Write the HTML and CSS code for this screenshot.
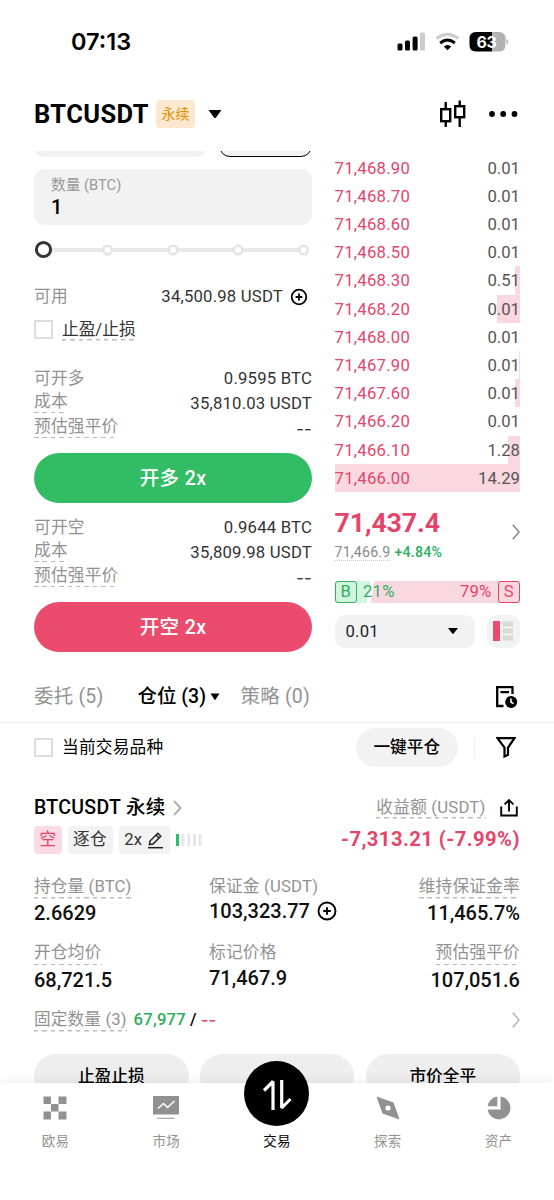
FILE: index.html
```html
<!DOCTYPE html>
<html lang="zh-CN">
<head>
<meta charset="utf-8">
<title>BTCUSDT 永续</title>
<link rel="stylesheet" href="styles.css">
</head>
<body>
<div class="app">
  <div class="status">
    <span class="time">07:13</span>
    <svg class="status-icons" width="112" height="22" viewBox="0 0 112 22">
      <g fill="#000"><rect x="0.5" y="12.5" width="5" height="7" rx="1.5"/><rect x="8" y="9.5" width="5" height="10" rx="1.5"/><rect x="15.600" y="5.500" width="5" height="14" rx="1.500"/></g>
      <rect x="23" y="1.500" width="5" height="18" rx="1.500" fill="#ccc"/>
      <g fill="none" stroke-width="3"><path d="M39.500 7.600Q50.500-0.800 61.500 7.600" stroke="#ccc"/><path d="M43.200 12Q50.500 5.900 57.800 12" stroke="#000"/></g>
      <path d="M46.800 15.500Q50.500 12.300 54.200 15.500L50.500 19.300Z"/>
      <path d="M79 1H95.200V20.500H79Q72.500 20.500 72.500 14V7.500Q72.500 1 79 1Z"/>
      <path d="M95.200 1H102Q108.500 1 108.500 7.500V14Q108.500 20.500 102 20.500H95.200Z" fill="#b2b2b2"/>
      <path d="M109.500 8Q111.300 9 111.300 10.700T109.500 13.500Z" fill="#b2b2b2"/>
      <text x="89.500" y="16.600" class="battery">63</text>
    </svg>
  </div>
  <header class="header">
    <h1>BTCUSDT</h1>
    <span class="perp">永续</span>
    <svg class="pair-caret" width="14" height="9" viewBox="0 0 14 9"><path d="M0.500 0H13.500L8 7.500Q7 8.600 6 7.500Z"/></svg>
    <svg class="candles" width="28" height="28" viewBox="0 0 28 28"><g fill="none" stroke="#000" stroke-width="2.400"><rect x="2.200" y="9.200" width="9" height="12"/><rect x="16.200" y="6.200" width="9" height="11"/><path d="M6.700 2V9M6.700 21.500V27M20.700 0.500V6M20.700 17.500V27"/></g></svg>
    <svg class="dots" width="30" height="8" viewBox="0 0 30 8"><circle cx="4" cy="4" r="2.900"/><circle cx="15.200" cy="4" r="2.900"/><circle cx="26.500" cy="4" r="2.900"/></svg>
  </header>
  <main class="scroll">
    <section class="trade">
      <div class="form">
        <div class="stubs"><div class="stub-a"></div><div class="stub-b"></div></div>
        <div class="input"><div class="input-label">数量 (BTC)</div><div class="input-value">1</div></div>
        <svg class="slider" width="278" height="50" viewBox="0 0 278 50">
          <path d="M10 25H270" stroke="#e9e9e9" stroke-width="4"/>
          <g fill="#fff" stroke="#e4e4e4" stroke-width="2.600"><circle cx="73.500" cy="25" r="4.300"/><circle cx="139" cy="25" r="4.300"/><circle cx="204" cy="25" r="4.300"/><circle cx="269.500" cy="25" r="4.300"/></g>
          <circle cx="9.500" cy="24.500" r="7.100" fill="#fff" stroke="#333" stroke-width="3"/>
        </svg>
        <div class="row avail"><span class="k">可用</span><span class="v">34,500.98 USDT</span>
          <svg class="plus" width="18" height="18" viewBox="0 0 18 18"><g fill="none" stroke="#000" stroke-width="1.800"><circle cx="9" cy="9" r="7.300"/><path d="M5.600 9H12.400M9 5.600V12.400"/></g></svg></div>
        <div class="row tpsl"><i class="check"></i><span class="dash dark">止盈/止损</span></div>
        <div class="info">
          <div class="row r1"><span class="k">可开多</span><span class="v">0.9595 BTC</span></div>
          <div class="row r2"><span class="k dash">成本</span><span class="v low">35,810.03 USDT</span></div>
          <div class="row r3"><span class="k dash">预估强平价</span><span class="v low none">--</span></div>
        </div>
        <div class="btn long">开多 2x</div>
        <div class="info second">
          <div class="row r1"><span class="k">可开空</span><span class="v">0.9644 BTC</span></div>
          <div class="row r2"><span class="k dash">成本</span><span class="v low">35,809.98 USDT</span></div>
          <div class="row r3"><span class="k dash">预估强平价</span><span class="v low none">--</span></div>
        </div>
        <div class="btn short">开空 2x</div>
      </div>
      <div class="book">
        <div class="ask d0"><b>71,468.90</b><span>0.01</span></div>
        <div class="ask d0"><b>71,468.70</b><span>0.01</span></div>
        <div class="ask d0"><b>71,468.60</b><span>0.01</span></div>
        <div class="ask d0"><b>71,468.50</b><span>0.01</span></div>
        <div class="ask d5"><b>71,468.30</b><span>0.51</span></div>
        <div class="ask d23"><b>71,468.20</b><span>0.01</span></div>
        <div class="ask d0"><b>71,468.00</b><span>0.01</span></div>
        <div class="ask d1"><b>71,467.90</b><span>0.01</span></div>
        <div class="ask d5"><b>71,467.60</b><span>0.01</span></div>
        <div class="ask d0"><b>71,466.20</b><span>0.01</span></div>
        <div class="ask d12"><b>71,466.10</b><span>1.28</span></div>
        <div class="ask dfull"><b>71,466.00</b><span>14.29</span></div>
        <div class="last">
          <div><div class="price">71,437.4</div><div class="mark"><span class="mark-px">71,466.9</span><span class="up">+4.84%</span></div></div>
          <svg width="8" height="16" viewBox="0 0 8 16"><path d="M0.800 0.800L7 8L0.800 15.200" fill="none" stroke="#888" stroke-width="1.500"/></svg>
        </div>
        <div class="ratio"><span class="side b">B</span><span class="pb">21%</span><span class="ps">79%</span><span class="side s">S</span></div>
        <div class="tools">
          <div class="tick">0.01<svg width="10" height="7" viewBox="0 0 10 7"><path d="M0 0H10L5.700 5.600Q5 6.400 4.300 5.600Z"/></svg></div>
          <div class="depth"><svg width="20" height="20" viewBox="0 0 20 20"><path d="M0 0H7V20H0Z" fill="#eb4b6d"/><path d="M9.500 0.500H20V5.500H9.500ZM9.500 7.500H20V12.500H9.500ZM9.500 14.500H20V19.500H9.500Z" fill="#d8dad8"/></svg></div>
        </div>
      </div>
    </section>
    <nav class="tabs">
      <span class="tab">委托 (5)</span>
      <span class="tab on">仓位 (3)</span><svg class="tab-caret" width="10" height="8" viewBox="0 0 10 8"><path d="M0.500 0.500H9.500L5.600 6.500Q5 7.200 4.400 6.500Z"/></svg>
      <span class="tab last-tab">策略 (0)</span>
      <svg class="history" width="24" height="24" viewBox="0 0 24 24"><path d="M18.500 9V2.200H3.200V21H9.500M6.500 7.200H15" fill="none" stroke="#000" stroke-width="2.300"/><circle cx="17.200" cy="17" r="6"/><path d="M17 13.500V17.200L19.600 18.600" fill="none" stroke="#fff" stroke-width="1.600"/></svg>
    </nav>
    <div class="filter">
      <i class="check"></i><span class="only">当前交易品种</span>
      <span class="close-all">一键平仓</span><i class="sep"></i>
      <svg width="20" height="23" viewBox="0 0 20 23"><path d="M1.500 2.200H18.500L12 11.500V18.800L8.500 20.500V11.500Z" fill="none" stroke="#000" stroke-width="2.200"/></svg>
    </div>
    <section class="position">
      <div class="head">
        <span class="name">BTCUSDT 永续</span>
        <svg class="go" width="9" height="16" viewBox="0 0 9 16"><path d="M1 1L7.500 8L1 15" fill="none" stroke="#b0b0b0" stroke-width="2"/></svg>
        <span class="dash pl">收益额 (USDT)</span>
        <svg width="18" height="19" viewBox="0 0 18 19"><path d="M1.200 8.500V17.500H16.800V8.500M9 13.500V2.500M4.600 6.400L9 2L13.400 6.400" fill="none" stroke="#000" stroke-width="1.900"/></svg>
      </div>
      <div class="tags">
        <span class="tag red">空</span><span class="tag iso">逐仓</span>
        <span class="tag lev">2x<svg width="17" height="18" viewBox="0 0 17 18"><g fill="none" stroke="#222" stroke-width="1.500"><path d="M2.500 13.500L3 10L10.800 2.200L13.800 5.200L6 13ZM9 4L12 7"/><path d="M1 16.700H16"/></g></svg></span>
        <svg class="adl" width="27" height="12" viewBox="0 0 27 12"><rect width="3" height="12" fill="#2ebd62"/><path d="M5.700 0H8.400V12H5.700ZM11.400 0H14.100V12H11.400ZM17.100 0H19.800V12H17.100ZM22.800 0H25.500V12H22.800Z" fill="#e6e6e6"/></svg>
        <span class="pnl">-7,313.21 (-7.99%)</span>
      </div>
      <div class="stats">
        <div><span class="dash">持仓量 (BTC)</span><strong>2.6629</strong></div>
        <div class="mid"><span>保证金 (USDT)</span><strong>103,323.77<svg width="20" height="20" viewBox="0 0 20 20"><g fill="none" stroke="#000" stroke-width="1.900"><circle cx="10" cy="10" r="8.500"/><path d="M6.200 10H13.800M10 6.200V13.800"/></g></svg></strong></div>
        <div class="right"><span class="dash">维持保证金率</span><strong>11,465.7%</strong></div>
        <div><span class="dash">开仓均价</span><strong>68,721.5</strong></div>
        <div class="mid"><span>标记价格</span><strong>71,467.9</strong></div>
        <div class="right"><span class="dash">预估强平价</span><strong>107,051.6</strong></div>
      </div>
      <div class="fixed">
        <span class="dash">固定数量 (3)</span><span class="tp">67,977</span><span class="slash">/</span><span class="sl none">--</span>
        <svg width="8" height="16" viewBox="0 0 8 16"><path d="M0.800 0.800L7 8L0.800 15.200" fill="none" stroke="#b5b5b5" stroke-width="1.500"/></svg>
      </div>
      <div class="actions"><span>止盈止损</span><span></span><span>市价全平</span></div>
    </section>
  </main>
  <footer class="nav">
    <div class="item"><svg width="24" height="24" viewBox="0 0 24 24"><path d="M0.500 0.500H8V8H0.500ZM15.500 0.500H23.500V8H15.500ZM8 8H15.500V15.500H8ZM0.500 15.500H8V23.500H0.500ZM15.500 15.500H23.500V23.500H15.500Z"/></svg><span>欧易</span></div>
    <div class="item"><svg width="26" height="24" viewBox="0 0 26 24"><path d="M0 0H26V18.500H0ZM4.500 21.800H21.500V22.800H4.500Z"/><path d="M5 12.500L10.500 7.500L14.500 11.500L21.500 5" fill="none" stroke="#fff" stroke-width="1.500"/></svg><span>市场</span></div>
    <div class="item active"><div class="disc"><svg width="32" height="36" viewBox="0 0 32 36"><path d="M3 14.500L12 5.500V34M20.700 4V32L29.500 23" fill="none" stroke="#fff" stroke-width="3.200" stroke-linejoin="bevel"/></svg></div><span>交易</span></div>
    <div class="item"><svg width="24" height="24" viewBox="0 0 24 24"><path d="M0.500 0.500L17.500 6.500L23.500 23.500L6.500 17.500Z"/><circle cx="12" cy="12" r="2.600" fill="#fff"/></svg><span>探索</span></div>
    <div class="item"><svg width="24" height="24" viewBox="0 0 24 24"><path d="M10.300 0.600V10.300H0.600A11.600 11.600 0 0 1 10.300 0.600ZM13.600 0.600A11.500 11.500 0 1 1 0.600 13.600H13.600Z"/></svg><span>资产</span></div>
  </footer>
</div>
</body>
</html>
```
FILE: styles.css
```css
* { box-sizing: border-box; }
body {
  margin: 0;
  background: #fff;
  color: #000;
  font: 16.7px/22px Roboto, "Noto Sans CJK SC", sans-serif;
  letter-spacing: 0.2px;
  white-space: nowrap;
}
svg { display: block; flex: none; }
i { display: block; flex: none; }
.app { width: 554px; height: 1200px; display: flex; flex-direction: column; overflow: hidden; }

.status { height: 84px; flex: none; padding: 0 45.500px 0 71px; display: flex; align-items: center; justify-content: space-between; }
.time { font: 600 23.500px/30px Inter, sans-serif; letter-spacing: 0; }
.battery { font: 700 16px Inter, sans-serif; fill: #fff; text-anchor: middle; letter-spacing: -0.300px; }

.header { height: 67px; flex: none; padding: 0 36.500px 7px 34px; display: flex; align-items: center; }
.header h1 { margin: 0; width: 116px; font-size: 25.500px; line-height: 30px; font-weight: 700; letter-spacing: 0.400px; }
.perp { margin-left: 6px; width: 39px; height: 28px; border-radius: 4px; background: #fbe8ce; color: #e09000; font-size: 14px; line-height: 28px; text-align: center; letter-spacing: 0; }
.pair-caret { margin-left: 13px; }
.candles { margin-left: auto; margin-right: 21px; }

.scroll { height: 932px; flex: none; overflow: hidden; }
.trade { height: 521px; padding: 0 34px; display: flex; justify-content: space-between; }
.form { width: 278px; }
.stubs { height: 5.500px; display: flex; justify-content: space-between; align-items: flex-end; overflow: hidden; }
.stub-a, .stub-b { height: 40px; border-radius: 11px; background: #f2f2f2; flex: none; }
.stub-a { width: 173px; }
.stub-b { width: 93px; border: 1.500px solid #000; }
.input { margin-top: 12px; height: 56px; border-radius: 11px; background: #f2f2f2; padding: 6px 17px; }
.input-label { font-size: 14.700px; line-height: 20px; color: #999; letter-spacing: 0; }
.input-value { font-size: 20px; line-height: 25px; font-weight: 500; }
.row { display: flex; align-items: center; justify-content: space-between; color: #333; }
.v { letter-spacing: 0.200px; }
.k { color: #929292; }
.avail { height: 44px; }
.avail .v { margin-left: auto; }
.avail .plus { margin: 0 4px 0 7px; }
.check { width: 19px; height: 19px; border: 2px solid #ddd; }
.tpsl { height: 22px; justify-content: flex-start; gap: 9px; }
.dash {
  background: repeating-linear-gradient(90deg, #bbb 0 4.500px, transparent 4.500px 8.400px) left bottom / 100% 1.500px no-repeat;
}
.tpsl .dash { letter-spacing: 0; }
.info { margin-top: 27.500px; }
.info.second { margin-top: 14px; }
.r1 { height: 22px; }
.r2 { height: 24px; }
.r3 { height: 26px; }
.low { padding-top: 4px; }
.none { font-family: Inter, sans-serif; }
.btn { margin-top: 12.500px; height: 50.500px; border-radius: 26px; color: #fff; font-size: 19.500px; line-height: 51.500px; font-weight: 500; text-align: center; letter-spacing: 0.400px; }
.long { background: #32bd65; }
.short { background: #eb4b6d; }

.book { width: 185.500px; padding-top: 2.800px; }
.ask { height: 28.180px; line-height: 29.500px; display: flex; justify-content: space-between; color: #555; letter-spacing: 0; background: linear-gradient(#fad8e0, #fad8e0) right / 0 100% no-repeat; }
.ask b { font-weight: 400; color: #e5446b; letter-spacing: 0.250px; }
.ask.d1 { background-size: 1px 100%; }
.ask.d5 { background-size: 5px 100%; }
.ask.d12 { background-size: 12px 100%; }
.ask.d23 { background-size: 23px 100%; }
.ask.dfull { background-size: 100% 100%; }
.last { height: 89px; padding-top: 14px; display: flex; justify-content: space-between; }
.last > svg { margin-top: 18px; }
.price { color: #e5446b; font-size: 26.700px; line-height: 34px; font-weight: 700; letter-spacing: -0.100px; }
.mark { display: flex; gap: 4px; font-size: 14.200px; line-height: 16px; margin-top: 4px; }
.mark-px { color: #888; border-bottom: 1px dotted #ccc; }
.up { color: #2baf5c; font-weight: 500; }
.ratio { height: 22px; display: flex; align-items: center; background: linear-gradient(100deg, #d2f5de 0 35px, #fff 35px 39px, #fad8e0 39px); border-radius: 2px; }
.side { width: 22.500px; height: 22px; border: 1.500px solid; border-radius: 3px; line-height: 20.500px; text-align: center; }
.b, .pb { color: #2fae60; }
.s, .ps { color: #e5446b; }
.pb { margin-left: 6px; }
.ps { margin-left: auto; margin-right: 6px; }
.tools { margin-top: 12px; display: flex; justify-content: space-between; }
.tick { width: 140px; height: 33px; padding: 1px 17px 0 11px; border-radius: 10px; background: #f2f2f2; display: flex; align-items: center; justify-content: space-between; color: #222; }
.depth { width: 33.500px; height: 33px; border-radius: 10px; background: #f2f2f2; display: grid; place-items: center; }

.tabs { height: 50.500px; padding: 0 36px 0 34px; border-bottom: 1.500px solid #eee; display: flex; align-items: center; font-size: 19.500px; color: #929292; }
.tab { width: 69px; }
.tab.on { margin-left: 34.500px; color: #000; font-weight: 500; letter-spacing: 0; }
.tab-caret { margin-left: 3px; }
.last-tab { margin-left: 21px; }
.history { margin-left: auto; }

.filter { height: 50.500px; padding: 0 38px 0 34px; display: flex; align-items: center; }
.only { margin-left: 9px; padding-top: 1px; }
.close-all { margin-left: auto; width: 101.500px; height: 39px; border-radius: 20px; background: #f2f2f2; line-height: 40px; font-weight: 500; text-align: center; letter-spacing: 0; }
.sep { width: 1px; height: 20px; margin: 0 21px 0 16.500px; background: #eee; }

.position { padding: 23px 34px 0; }
.head { height: 23px; display: flex; align-items: center; color: #929292; }
.name { color: #000; font-size: 19.500px; font-weight: 500; width: 132px; letter-spacing: 0.300px; }
.go { margin-left: 7px; }
.pl { margin-left: auto; margin-right: 14.500px; }
.head > svg:last-child { margin-right: 2px; }
.tags { margin-top: 6.500px; height: 28px; display: flex; align-items: center; }
.tag { height: 28px; line-height: 28px; border-radius: 4px; background: #f2f2f2; color: #333; text-align: center; }
.red { width: 28px; background: #fbdbe3; color: #e5446b; }
.iso { width: 45px; margin-left: 5.500px; }
.lev { width: 51.500px; margin-left: 6px; display: flex; align-items: center; justify-content: center; gap: 5px; }
.adl { margin-left: 6px; }
.pnl { margin-left: auto; padding-bottom: 2px; color: #e5446b; font-size: 20.200px; font-weight: 700; letter-spacing: 0.450px; }

.stats { margin-top: 22px; display: grid; grid-template-columns: 175px 1fr auto; row-gap: 11px; }
.stats > div { height: 55.500px; color: #929292; display: flex; flex-direction: column; align-items: flex-start; }
.stats span { line-height: 22px; height: 23px; }
.stats > div:first-child span { letter-spacing: 0.100px; }
.stats strong { margin-top: 2.500px; color: #111; font-size: 20px; line-height: 24px; font-weight: 500; letter-spacing: 0; display: flex; align-items: center; gap: 7px; }
.stats .right { align-items: flex-end; }
.stats .mid strong { margin-top: 0.500px; }
.fixed { margin-top: 10.500px; height: 24px; display: flex; align-items: center; color: #929292; }
.fixed .dash { height: 23px; letter-spacing: 0.100px; }
.tp { margin-left: 7px; color: #2baf5c; font-weight: 500; }
.slash { margin-left: 4px; color: #000; font-weight: 500; }
.sl { margin-left: 4px; color: #e5446b; font-weight: 500; }
.fixed svg { margin-left: auto; }
.actions { margin-top: 21.500px; display: flex; justify-content: space-between; }
.actions span { width: 154.500px; height: 44px; border-radius: 22px; background: #eee; line-height: 45px; text-align: center; font-weight: 500; letter-spacing: 0; }

.nav { position: relative; flex: none; height: 117px; background: #fff; box-shadow: 0 -2px 10px rgba(0, 0, 0, 0.07); display: grid; grid-template-columns: repeat(5, 1fr); padding-top: 13px; }
.item { display: flex; flex-direction: column; align-items: center; fill: #919191; color: #919191; font-size: 13.500px; }
.item span { margin-top: 11px; line-height: 21px; }
.active { color: #000; }
.disc { width: 65px; height: 65px; margin-top: -35px; margin-bottom: -6px; border-radius: 50%; background: #000; display: grid; place-items: center; }
```
